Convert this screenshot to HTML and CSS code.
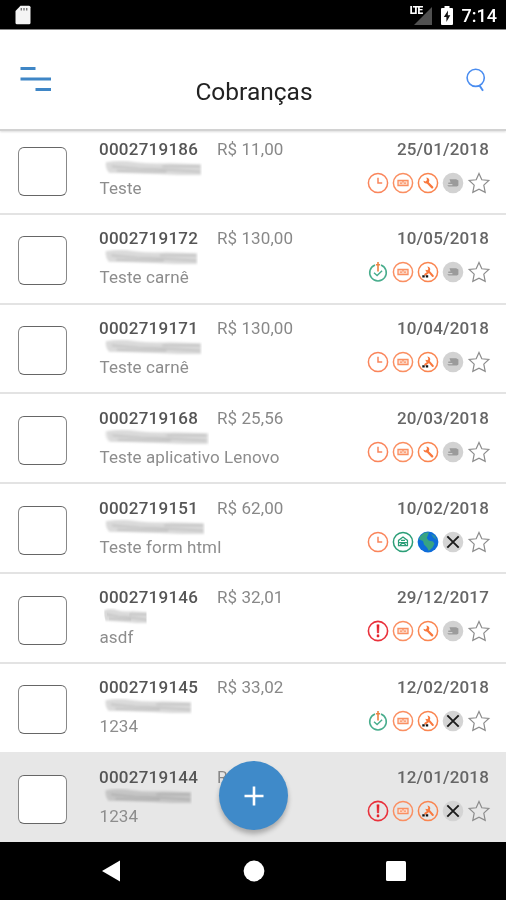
FILE: index.html
```html
<!DOCTYPE html>
<html lang="pt-BR">
<head>
<meta charset="utf-8">
<title>Cobranças</title>
<link rel="stylesheet" href="styles.css">
</head>
<body>
<svg class="defs" aria-hidden="true">
  <defs>
    <symbol id="clock" viewBox="0 0 24 24"><circle cx="12" cy="12" r="9.6" fill="none" stroke="#fa855b" stroke-width="1.5"/><path d="M12 6.7V12h4.2" fill="none" stroke="#fa855b" stroke-width="1.5"/></symbol>
    <symbol id="mail" viewBox="0 0 24 24"><circle cx="12" cy="12" r="9.6" fill="none" stroke="#fa8f62" stroke-width="1.5"/><path d="M7 9.5h10v5H7z" fill="#fde0d2" stroke="#fa8f62" stroke-width="1.3"/><path d="M9 12.2h2.2M12.8 12.2H15M12 10v1.6" fill="none" stroke="#fa8f62" stroke-width="1.3"/></symbol>
    <symbol id="tool" viewBox="0 0 24 24"><circle cx="12" cy="12" r="9.6" fill="none" stroke="#fa8550" stroke-width="1.5"/><path d="M16.2 16.4l-5-5.2" stroke="#f9783d" stroke-width="2.3" stroke-linecap="round"/><path d="M10.4 6.6c2.5.3 3.6 2.2 2.6 4.2-.8 1.7-3 2.2-4.8 1l-.9-2 2.5.7 1.2-1.4z" fill="#f9783d"/></symbol>
    <symbol id="tool-dots" viewBox="0 0 24 24"><circle cx="12" cy="12" r="9.6" fill="none" stroke="#fa8550" stroke-width="1.5"/><path d="M16.8 16l-4-4.6M12.4 12.2L9.2 14.600" stroke="#f9783d" stroke-width="2" stroke-linecap="round"/><path d="M11.400 6.600c2.500.3 3.400 2.200 2.600 4-.8 1.400-2.400 1.800-4 .8l-.6-1.600 2 .5 1-1.300z" fill="#f9783d"/><path d="M6.300 15.200h2.400v2.200H6.300zM9.800 15.200h2.400v2.200H9.800z" fill="#111"/></symbol>
    <symbol id="stamp" viewBox="0 0 24 24"><circle cx="12" cy="12" r="10.3" fill="#d2d2d2"/><path d="M8.5 8.2h6.7l2.2 1.4v4.8l-1.4 1.2H7.6l-1.4-1.4h5.2v-1.2H7.2l.2-1.6h2.2z" fill="#9b9b9b"/></symbol>
    <symbol id="star" viewBox="0 0 24 24"><path d="M12 2.5l2.8 6.3 7 .6-5 4.7 1.4 7.2-6.2-3.2-6.2 3.2 1.4-7.2-5-4.7 7-.6z" fill="none" stroke="#8c8c8c" stroke-width="1.2"/></symbol>
    <symbol id="done" viewBox="0 0 24 24"><path d="M9 4.9a8.3 8.3 0 1 0 6 0" fill="none" stroke="#49ad8d" stroke-width="1.6"/><path d="M8 12.7l3.1 2.8 5-4.8" fill="none" stroke="#49ad8d" stroke-width="1.4"/><path d="M12 2v9.5M9.9 4.8h4.2" stroke="#ec8342" stroke-width="1.6"/></symbol>
    <symbol id="read" viewBox="0 0 24 24"><circle cx="12" cy="12" r="9.6" fill="none" stroke="#2b9e77" stroke-width="1.5"/><path d="M7.5 15.6v-5.2L12 7l4.5 3.4v5.2zM7.6 12.6h8.8M10 10.3h4M9 15l3-2.2 3 2.2" fill="none" stroke="#2b9e77" stroke-width="1.2"/></symbol>
    <symbol id="globe" viewBox="0 0 24 24"><circle cx="12" cy="12" r="10.4" fill="#0d6cda"/><path d="M4.2 6.2l4-3.4 4.8-.5-1 2.6-1.2 3 1.8 2.7 4.4.8 1.5 2.3-2 3.8-3.7 3.4-1.5-2.8-3.3-3.7-1-3.5-4.3-1.7z" fill="#37a383"/><path d="M15 4l4 1.8 2 4.2-3.8-2.4z" fill="#298fa6"/></symbol>
    <symbol id="cross" viewBox="0 0 24 24"><circle cx="12" cy="12" r="10.3" fill="#d4d4d4"/><path d="M6.3 6.3L17.7 17.7M17.7 6.3L6.3 17.7" stroke="#1c1c1c" stroke-width="1.9"/></symbol>
    <symbol id="alert" viewBox="0 0 24 24"><circle cx="12" cy="12" r="9.6" fill="none" stroke="#e9313b" stroke-width="1.6"/><path d="M10.9 5.7h2.2l-.4 8.2h-1.4zM11 15.8h2v2.2h-2z" fill="#e5202b" stroke="#e5202b" stroke-width=".5"/></symbol>
    <filter id="soft" x="-10%" y="-30%" width="120%" height="160%"><feGaussianBlur stdDeviation="1.3 .8"/></filter>
    <symbol id="smudge" viewBox="0 0 100 16" preserveAspectRatio="none"><g filter="url(#soft)"><path d="M3 2q15-2 30 0t34 1l32 1v10l-22 0-30-1-41-1q-4-5-3-10z" fill="#dadada"/><path d="M9 6l26 2 28 1 35 2M14 10l30 1 20 0M60 6l38 0" fill="none" stroke="#c2c2c2" stroke-width="1.6"/></g></symbol>
  </defs>
</svg>

<div class="phone">
  <div class="status">
    <svg class="sd" viewBox="0 0 16 20"><path d="M5.5.8H14q1.5 0 1.5 1.5v15.4q0 1.5-1.5 1.5H2q-1.5 0-1.5-1.5V6z" fill="#f4f4f4"/><path d="M6.3 3v2.4M9 3v2.4M11.7 3v2.4" stroke="#777" stroke-width="1.4"/></svg>
    <div class="signals">
      <span class="lte">LTE</span>
      <svg class="signal" viewBox="0 0 18 18"><path d="M18 0v18H0z" fill="#505050"/></svg>
      <svg class="battery" viewBox="0 0 12 19"><path d="M3.5 0h5v2H11q1 0 1 1v15q0 1-1 1H1q-1 0-1-1V3q0-1 1-1h2.5z" fill="#fff"/><path d="M7 4.5L2.8 11h2.6v5L9.3 9.3H6.8z" fill="#111"/></svg>
      <span class="time">7:14</span>
    </div>
  </div>

  <header class="header">
    <svg class="menu" viewBox="0 0 32 26"><path d="M.5 2.5h15M.5 13H31M15.5 23.5H31" stroke="#3f86c6" stroke-width="3"/></svg>
    <h1>Cobranças</h1>
    <svg class="search" viewBox="0 0 20 24"><circle cx="9.7" cy="9.8" r="8.6" fill="none" stroke="#4a8df0" stroke-width="1.6"/><path d="M13.4 17.4l3.6 5.4" stroke="#4a8df0" stroke-width="1.9"/></svg>
  </header>

  <main class="list">
    <article class="row">
      <span class="check"></span>
      <div class="info"><div class="top"><b>0002719186</b><span>R$ 11,00</span></div><svg class="name w98"><use href="#smudge"/></svg><p>Teste</p></div>
      <div class="side"><b>25/01/2018</b><div class="icons"><svg><use href="#clock"/></svg><svg><use href="#mail"/></svg><svg><use href="#tool"/></svg><svg><use href="#stamp"/></svg><svg><use href="#star"/></svg></div></div>
    </article>
    <article class="row">
      <span class="check"></span>
      <div class="info"><div class="top"><b>0002719172</b><span>R$ 130,00</span></div><svg class="name w94"><use href="#smudge"/></svg><p>Teste carnê</p></div>
      <div class="side"><b>10/05/2018</b><div class="icons"><svg><use href="#done"/></svg><svg><use href="#mail"/></svg><svg><use href="#tool-dots"/></svg><svg><use href="#stamp"/></svg><svg><use href="#star"/></svg></div></div>
    </article>
    <article class="row">
      <span class="check"></span>
      <div class="info"><div class="top"><b>0002719171</b><span>R$ 130,00</span></div><svg class="name w98"><use href="#smudge"/></svg><p>Teste carnê</p></div>
      <div class="side"><b>10/04/2018</b><div class="icons"><svg><use href="#clock"/></svg><svg><use href="#mail"/></svg><svg><use href="#tool-dots"/></svg><svg><use href="#stamp"/></svg><svg><use href="#star"/></svg></div></div>
    </article>
    <article class="row">
      <span class="check"></span>
      <div class="info"><div class="top"><b>0002719168</b><span>R$ 25,56</span></div><svg class="name w106"><use href="#smudge"/></svg><p>Teste aplicativo Lenovo</p></div>
      <div class="side"><b>20/03/2018</b><div class="icons"><svg><use href="#clock"/></svg><svg><use href="#mail"/></svg><svg><use href="#tool"/></svg><svg><use href="#stamp"/></svg><svg><use href="#star"/></svg></div></div>
    </article>
    <article class="row">
      <span class="check"></span>
      <div class="info"><div class="top"><b>0002719151</b><span>R$ 62,00</span></div><svg class="name w102"><use href="#smudge"/></svg><p>Teste form html</p></div>
      <div class="side"><b>10/02/2018</b><div class="icons"><svg><use href="#clock"/></svg><svg><use href="#read"/></svg><svg><use href="#globe"/></svg><svg><use href="#cross"/></svg><svg><use href="#star"/></svg></div></div>
    </article>
    <article class="row">
      <span class="check"></span>
      <div class="info"><div class="top"><b>0002719146</b><span>R$ 32,01</span></div><svg class="name w42"><use href="#smudge"/></svg><p>asdf</p></div>
      <div class="side"><b>29/12/2017</b><div class="icons"><svg><use href="#alert"/></svg><svg><use href="#mail"/></svg><svg><use href="#tool"/></svg><svg><use href="#stamp"/></svg><svg><use href="#star"/></svg></div></div>
    </article>
    <article class="row">
      <span class="check"></span>
      <div class="info"><div class="top"><b>0002719145</b><span>R$ 33,02</span></div><svg class="name w90"><use href="#smudge"/></svg><p>1234</p></div>
      <div class="side"><b>12/02/2018</b><div class="icons"><svg><use href="#done"/></svg><svg><use href="#mail"/></svg><svg><use href="#tool-dots"/></svg><svg><use href="#cross"/></svg><svg><use href="#star"/></svg></div></div>
    </article>
    <article class="row selected">
      <span class="check"></span>
      <div class="info"><div class="top"><b>0002719144</b><span>R$</span></div><svg class="name w90"><use href="#smudge"/></svg><p>1234</p></div>
      <div class="side"><b>12/01/2018</b><div class="icons"><svg><use href="#alert"/></svg><svg><use href="#mail"/></svg><svg><use href="#tool-dots"/></svg><svg><use href="#cross"/></svg><svg><use href="#star"/></svg></div></div>
    </article>
    <button class="fab" aria-label="Adicionar"><svg viewBox="0 0 20 20"><path d="M10 .5v19M.5 10h19" stroke="#fff" stroke-width="2.6"/></svg></button>
  </main>

  <nav class="nav">
    <svg viewBox="0 0 24 24"><path d="M21 1.5v21L3 12z" fill="#fff"/></svg>
    <svg viewBox="0 0 24 24"><circle cx="12" cy="12" r="10.4" fill="#fff"/></svg>
    <svg viewBox="0 0 24 24"><rect x="2" y="2" width="20" height="20" rx="1.5" fill="#fff"/></svg>
  </nav>
</div>
</body>
</html>
```
FILE: styles.css
```css
* { box-sizing: border-box; }
body { margin: 0; background: #fff; font-family: Roboto, "Liberation Sans", sans-serif; }
.defs { position: absolute; width: 0; height: 0; }
.phone { display: flex; flex-direction: column; width: 506px; height: 900px; overflow: hidden; }

.status { display: flex; justify-content: space-between; flex: none; height: 30px; padding: 5px 9px 0 15px; background: #000; border-bottom: 1px solid #8a8a8a; color: #fff; }
.sd { width: 16px; height: 20px; }
.signals { display: flex; align-items: flex-start; }
.lte { font-size: 10px; line-height: 11px; font-weight: 900; letter-spacing: -1.5px; margin-right: -8px; z-index: 1; }
.signal { width: 18px; height: 18px; margin: 2px 9px 0 0; }
.battery { width: 12px; height: 19px; margin: 1px 9px 0 0; }
.time { font-size: 18px; line-height: 22px; font-weight: 500; }

.header { display: grid; grid-template-columns: 52px 1fr 52px; flex: none; height: 101px; border-bottom: 2px solid #d2d2d2; box-shadow: 0 1px 2px #0002; z-index: 1; background: #fff; }
.menu { width: 32px; height: 26px; margin: 36px 0 0 20px; }
.search { width: 20px; height: 24px; margin: 38px 0 0 12px; }
h1 { margin: 47px 0 0; padding-left: 2px; text-align: center; font-size: 24.5px; line-height: 30px; font-weight: 400; color: #222; }

.list { position: relative; flex: 1; min-height: 0; overflow: hidden; }
.row { display: flex; flex: none; height: 89.8px; padding: 0 17px 0 18px; border-bottom: 2px solid #e3e3e3; background: #fff; }
.row:first-child { margin-top: -6px; }
.row:nth-child(7) { border-bottom-color: #e7e7e7; }
.selected { background: #e7e7e7; border-bottom-color: #e7e7e7; }
.check { width: 49px; height: 49px; margin-top: 21.7px; border: 1.5px solid #888; border-top-color: #666; border-bottom-color: #666; border-radius: 6px; background: #fff; }
.info { flex: 1; display: flex; flex-direction: column; margin: 13.5px 0 0 32px; }
.top { display: flex; height: 20px; line-height: 20px; font-size: 17px; color: #888; }
.top b { width: 118px; font-weight: 500; color: #555; letter-spacing: .25px; }
.top span { letter-spacing: .08px; }
.name { height: 17px; margin: 1px 0 0 4px; mix-blend-mode: multiply; }
.w42 { width: 44px; }
.w90 { width: 89px; }
.w94 { width: 95px; }
.w98 { width: 99px; }
.w102 { width: 102px; }
.w106 { width: 106px; }
.info p { margin: 1.2px 0 0 .5px; font-size: 17px; line-height: 20px; color: #8d8d8d; letter-spacing: .1px; }
.side { display: flex; flex-direction: column; align-items: flex-end; margin-top: 13.5px; }
.side b { font-size: 17px; line-height: 20px; font-weight: 500; color: #666; letter-spacing: .15px; }
.icons { display: flex; gap: 1.3px; margin: 12px -1.7px 0 0; }
.icons svg { width: 24px; height: 24px; }

.fab { position: absolute; left: 219px; top: 630px; display: flex; align-items: center; justify-content: center; width: 69px; height: 69px; padding: 0; border: 0; border-radius: 50%; background: #3f8ac9; box-shadow: 0 4px 5px #0004; }
.fab svg { width: 20px; height: 20px; }

.nav { display: flex; justify-content: space-between; flex: none; height: 58px; padding: 17px 98px 0 99px; background: #000; }
.nav svg { width: 24px; height: 24px; }
```
